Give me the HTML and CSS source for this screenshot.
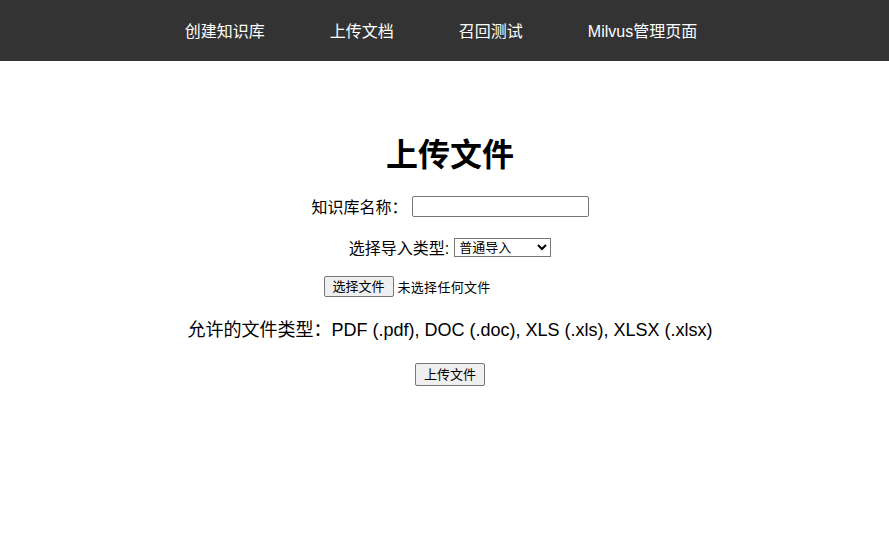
FILE: index.html
```html
<!DOCTYPE html>
<html lang="zh">
<head>
<meta charset="utf-8">
<title>上传文件</title>
<link rel="stylesheet" href="styles.css">
</head>
<body>
<nav class="navbar">
  <a class="nav-link" href="#">创建知识库</a>
  <a class="nav-link" href="#">上传文档</a>
  <a class="nav-link" href="#">召回测试</a>
  <a class="nav-link" href="#">Milvus管理页面</a>
</nav>
<main class="main">
  <h1 class="title">上传文件</h1>
  <div class="row row-name">
    <label class="label" for="kb">知识库名称：</label>
    <input class="text-input" id="kb" type="text">
  </div>
  <div class="row row-type">
    <label class="label" for="tp">选择导入类型:</label>
    <select class="select" id="tp">
      <option>普通导入</option>
    </select>
  </div>
  <div class="row row-file">
    <div class="file-input">
      <button class="btn" type="button">选择文件</button>
      <span class="file-status">未选择任何文件</span>
    </div>
  </div>
  <p class="row allowed">允许的文件类型：PDF (.pdf), DOC (.doc), XLS (.xls), XLSX (.xlsx)</p>
  <div class="row row-submit">
    <button class="btn btn-submit" type="button">上传文件</button>
  </div>
</main>
</body>
</html>
```

FILE: styles.css
```css
* { box-sizing: border-box; }
body {
  margin: 0;
  font-family: "Liberation Sans", Arial, "Noto Sans CJK SC", sans-serif;
  color: #000;
  background: #fff;
}
.navbar {
  height: 61px;
  background: #333;
  display: flex;
  justify-content: center;
  align-items: center;
  gap: 65px;
  padding-right: 7px;
}
.nav-link {
  color: #fff;
  text-decoration: none;
  font-size: 16px;
  line-height: 20px;
  margin-top: 2px;
}
.main {
  display: flex;
  flex-direction: column;
  align-items: center;
  padding-top: 74px;
  padding-left: 11px;
}
.title {
  margin: 0;
  font-size: 32px;
  line-height: 40px;
  font-weight: bold;
  margin-bottom: 20px;
}
.row {
  display: flex;
  align-items: center;
  margin: 0;
}
.row-name { height: 22px; gap: 4px; margin-bottom: 20px; }
.label { font-size: 16px; }
.text-input {
  width: 177px;
  height: 21px;
  border: 1px solid #767676;
  border-radius: 2px;
  padding: 1px 2px;
  font-size: 13px;
}
.row-type { height: 20px; gap: 5px; margin-bottom: 19px; }
.select {
  width: 97px;
  height: 19px;
  font-size: 13px;
  font-family: "Liberation Sans", Arial, "Noto Sans CJK SC", sans-serif;
  border: 1px solid #767676;
  border-radius: 0;
  background: #fff;
  color: #000;
  padding: 0;
}
.row-file { height: 21px; margin-bottom: 22px; }
.file-input {
  width: 253px;
  display: flex;
  align-items: center;
  gap: 4px;
}
.btn {
  font-family: "Liberation Sans", Arial, "Noto Sans CJK SC", sans-serif;
  font-size: 13px;
  height: 21px;
  padding: 0 8px;
  background: #efefef;
  border: 1px solid #767676;
  border-radius: 2px;
  color: #000;
  line-height: 17px;
}
.file-status { font-size: 13px; letter-spacing: 0.3px; }
.allowed { font-size: 18px; height: 22px; line-height: 22px; margin-bottom: 22px; }
.row-submit { height: 23px; }
.btn-submit { height: 23px; width: 70px; padding: 0; }
```
